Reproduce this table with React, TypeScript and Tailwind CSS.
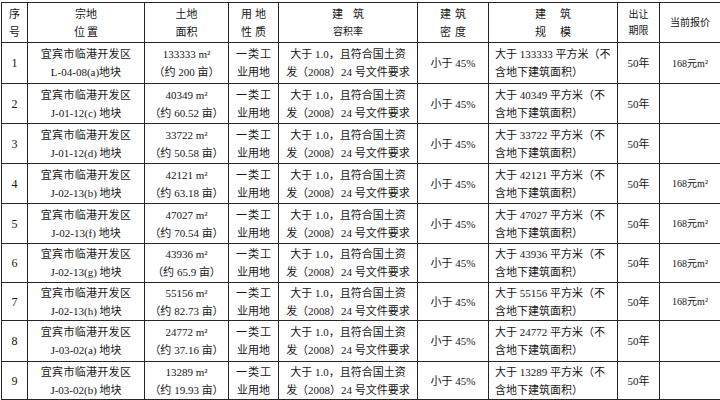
import React from "react";

type Row = {
  no: string;
  code: string;
  area: string;
  mu: string;
  price?: boolean;
  h: string;
};

const rows: Row[] = [
  { no: "1", code: "L-04-08(a)地块", area: "133333", mu: "200", price: true, h: "h-[41px]" },
  { no: "2", code: "J-01-12(c) 地块", area: "40349", mu: "60.52", h: "h-[40px]" },
  { no: "3", code: "J-01-12(d) 地块", area: "33722", mu: "50.58", h: "h-[40px]" },
  { no: "4", code: "J-02-13(b) 地块", area: "42121", mu: "63.18", price: true, h: "h-[40px]" },
  { no: "5", code: "J-02-13(f) 地块", area: "47027", mu: "70.54", price: true, h: "h-[40px]" },
  { no: "6", code: "J-02-13(g) 地块", area: "43936", mu: "65.9", price: true, h: "h-[39px]" },
  { no: "7", code: "J-02-13(h) 地块", area: "55156", mu: "82.73", price: true, h: "h-[38px]" },
  { no: "8", code: "J-03-02(a) 地块", area: "24772", mu: "37.16", h: "h-[41px]" },
  { no: "9", code: "J-03-02(b) 地块", area: "13289", mu: "19.93", h: "h-[38px]" },
];

const td = "border border-[#262626] p-0 align-middle";

export default function App() {
  return (
    <div
      className="w-[720px] h-[400px] bg-white overflow-hidden text-[#161616]"
      style={{ fontFamily: '"Liberation Serif", "Noto Sans CJK SC", serif' }}
    >
      <div className="pt-[2px] pl-[1px]">
        <table className="border-collapse table-fixed w-[719px] text-[11px] leading-[18px]">
          <colgroup>
            <col className="w-[26px]" />
            <col className="w-[117px]" />
            <col className="w-[84px]" />
            <col className="w-[50px]" />
            <col className="w-[139px]" />
            <col className="w-[71px]" />
            <col className="w-[129px]" />
            <col className="w-[42px]" />
            <col className="w-[61px]" />
          </colgroup>
          <thead>
            <tr className="h-[40px] text-center">
              <td className={td}>
                <div>序</div>
                <div>号</div>
              </td>
              <td className={td}>
                <div>宗地</div>
                <div className="tracking-[2px] pl-[2px]">位置</div>
              </td>
              <td className={td}>
                <div>土地</div>
                <div>面积</div>
              </td>
              <td className={td}>
                <div className="tracking-[3px] pl-[3px]">用地</div>
                <div className="tracking-[3px] pl-[3px]">性质</div>
              </td>
              <td className={td}>
                <div className="tracking-[10px] pl-[10px]">建筑</div>
                <div className="text-[10px]">容积率</div>
              </td>
              <td className={td}>
                <div className="tracking-[4px] pl-[4px]">建筑</div>
                <div className="tracking-[4px] pl-[4px]">密度</div>
              </td>
              <td className={td}>
                <div className="tracking-[14px] pl-[14px]">建筑</div>
                <div className="tracking-[14px] pl-[14px]">规模</div>
              </td>
              <td className={td}>
                <div className="text-[10px] leading-[16px]">出让</div>
                <div className="text-[10px] leading-[16px]">期限</div>
              </td>
              <td className={td}>
                <div className="text-[10px]">当前报价</div>
              </td>
            </tr>
          </thead>
          <tbody>
            {rows.map((r) => (
              <tr key={r.no} className={`${r.h} text-center`}>
                <td className={`${td} text-[12px]`}>{r.no}</td>
                <td className={td}>
                  <div className="tracking-[0.3px]">宜宾市临港开发区</div>
                  <div>{r.code}</div>
                </td>
                <td className={td}>
                  <div>{r.area} m²</div>
                  <div>（约 {r.mu} 亩）</div>
                </td>
                <td className={td}>
                  <div className="tracking-[1px] pl-[1px]">一类工</div>
                  <div>业用地</div>
                </td>
                <td className={td}>
                  <div className="whitespace-nowrap">大于 1.0，且符合国土资</div>
                  <div className="whitespace-nowrap">发（2008）24 号文件要求</div>
                </td>
                <td className={td}>小于 45%</td>
                <td className={`${td} text-left pl-[6px]`}>
                  <div className="whitespace-nowrap">大于 {r.area} 平方米（不</div>
                  <div className="whitespace-nowrap">含地下建筑面积）</div>
                </td>
                <td className={td}>50年</td>
                <td className={td}>
                  {r.price ? <span className="text-[10px]">168元m²</span> : null}
                </td>
              </tr>
            ))}
          </tbody>
        </table>
      </div>
    </div>
  );
}
